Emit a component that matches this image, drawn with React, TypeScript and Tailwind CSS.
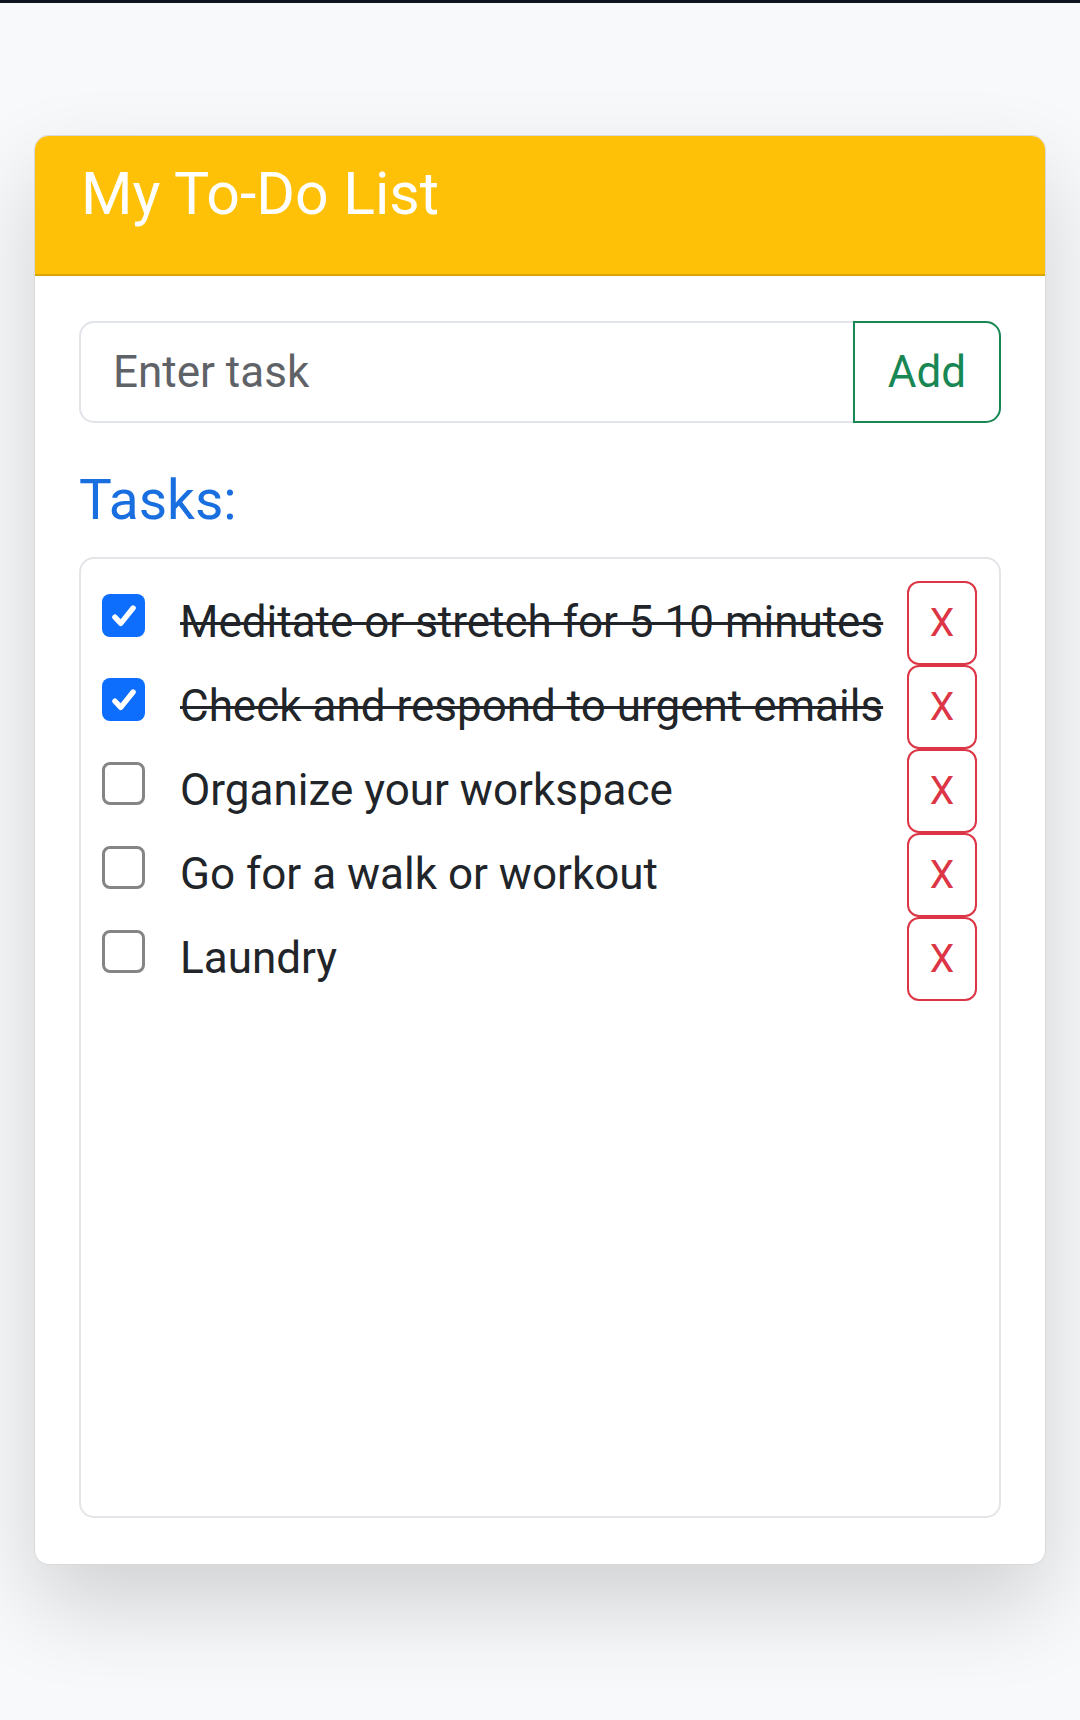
import { useState } from "react";

type Task = { id: number; text: string; done: boolean };

const initialTasks: Task[] = [
  { id: 1, text: "Meditate or stretch for 5 10 minutes", done: true },
  { id: 2, text: "Check and respond to urgent emails", done: true },
  { id: 3, text: "Organize your workspace", done: false },
  { id: 4, text: "Go for a walk or workout", done: false },
  { id: 5, text: "Laundry", done: false },
];

const CheckBox = ({ checked, onClick }: { checked: boolean; onClick: () => void }) => (
  <button
    onClick={onClick}
    className={
      checked
        ? "mt-[13px] flex h-[43px] w-[43px] shrink-0 items-center justify-center rounded-[8px] bg-[#0d6efd]"
        : "mt-[13px] h-[43px] w-[43px] shrink-0 rounded-[8px] border-[3px] border-[#858585] bg-white"
    }
  >
    {checked && (
      <svg width="38" height="38" viewBox="0 0 20 20">
        <path
          d="M5.2 10.6l3.1 3.3L14.8 5.8"
          fill="none"
          stroke="white"
          strokeWidth="2.8"
          strokeLinecap="round"
          strokeLinejoin="round"
        />
      </svg>
    )}
  </button>
);

export default function App() {
  const [tasks, setTasks] = useState<Task[]>(initialTasks);
  const [value, setValue] = useState("");

  const addTask = () => {
    if (!value.trim()) return;
    setTasks([...tasks, { id: Date.now(), text: value.trim(), done: false }]);
    setValue("");
  };

  const toggle = (id: number) =>
    setTasks(tasks.map((t) => (t.id === id ? { ...t, done: !t.done } : t)));

  const remove = (id: number) => setTasks(tasks.filter((t) => t.id !== id));

  return (
    <div
      className="min-h-[1720px] border-t-[3px] border-[#10141f] bg-[#f8f9fa] pt-[132px] pl-[34px] pr-[34px]"
      style={{ fontFamily: "Roboto, 'Noto Sans', sans-serif" }}
    >
      {/* card */}
      <div className="overflow-hidden rounded-[15px] border border-black/15 bg-white shadow-[0_40px_90px_rgba(0,0,0,0.16)]">
        <div className="h-[140px] border-b-2 border-black/15 bg-[#ffc107] px-[46px] pt-[28px]">
          <h2 className="text-[59px] leading-none font-normal text-white">My To-Do List</h2>
        </div>

        <div className="px-[44px] pt-[45px] pb-[46px]">
          {/* input group */}
          <div className="flex h-[102px]">
            <input
              value={value}
              onChange={(e) => setValue(e.target.value)}
              placeholder="Enter task"
              className="min-w-0 flex-1 rounded-l-[15px] border-2 border-r-0 border-[#e1e4e8] px-[32px] text-[44px] text-[#212529] outline-none placeholder:text-[#5f6368]"
            />
            <button
              onClick={addTask}
              className="w-[148px] rounded-r-[15px] border-2 border-[#198754] text-[44px] text-[#198754]"
            >
              Add
            </button>
          </div>

          <h3 className="mt-[50px] text-[55px] leading-none font-normal text-[#1a6fe0]">Tasks:</h3>

          {/* list */}
          <div className="mt-[29px] h-[961px] overflow-y-auto rounded-[15px] border-2 border-[#e3e5e8] pt-[22px] pl-[21px] pr-[22px]">
            {tasks.map((t) => (
              <div key={t.id} className="flex h-[84px] items-start">
                <CheckBox checked={t.done} onClick={() => toggle(t.id)} />
                <span
                  className={
                    t.done
                      ? "mt-[19px] ml-[35px] flex-1 text-[44px] leading-none whitespace-nowrap text-[#212529] line-through decoration-[3px]"
                      : "mt-[19px] ml-[35px] flex-1 text-[44px] leading-none whitespace-nowrap text-[#212529]"
                  }
                >
                  {t.text}
                </span>
                <button
                  onClick={() => remove(t.id)}
                  className="flex h-[84px] w-[70px] shrink-0 items-center justify-center rounded-[12px] border-2 border-[#dc3545] text-[39px] text-[#dc3545]"
                >
                  X
                </button>
              </div>
            ))}
          </div>
        </div>
      </div>
    </div>
  );
}
